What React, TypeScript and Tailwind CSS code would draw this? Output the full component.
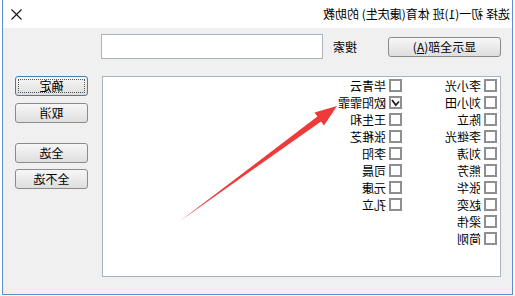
import React from 'react';

const col1 = ['李小光', '刘小田', '陈立', '李继光', '刘涛', '熊芳', '张华', '赵奕', '梁伟', '简刚'];
const col2 = ['毕青云', '欧阳霏霏', '王生和', '张稚芝', '李阳', '司晨', '元康', '孔立'];
const checked = ['欧阳霏霏'];

function Check({ label }: { label: string }) {
  const on = checked.includes(label);
  return (
    <div className="flex h-[17px] items-center gap-[3px]">
      <div className="flex h-[13px] w-[13px] items-center justify-center border-2 border-[#8f8f8f] bg-white">
        {on && (
          <svg width="9" height="9" viewBox="0 0 9 9">
            <path d="M1 3.5 L4.2 7 L8 2" fill="none" stroke="#222" strokeWidth="1.8" />
          </svg>
        )}
      </div>
      <span className="whitespace-nowrap text-[12px] leading-none text-black">{label}</span>
    </div>
  );
}

function Btn({ children, main }: { children: React.ReactNode; main?: boolean }) {
  return (
    <button
      className={
        'flex h-[20px] w-[73px] items-center justify-center rounded-[3px] border bg-gradient-to-b from-[#f7f7f7] to-[#dedede] text-[12px] text-black ' +
        (main ? 'border-[#3c7fb1]' : 'border-[#8a8a8a]')
      }
    >
      {main ? (
        <span className="flex h-[14px] w-[67px] items-center justify-center border border-dotted border-[#555]">
          {children}
        </span>
      ) : (
        children
      )}
    </button>
  );
}

export default function App() {
  return (
    <div
      className="relative h-[296px] w-[515px] overflow-hidden bg-white"
      style={{ fontFamily: '"Noto Sans CJK SC", "Liberation Sans", sans-serif' }}
    >
      <div className="h-full w-full -scale-x-100 px-[2px] pb-[1px]">
        <div className="flex h-full flex-col border-x border-b border-[#5b8fc7]">
          <div className="flex h-[28px] shrink-0 items-center justify-between bg-white pl-[2px] pr-[8px]">
            <span className="text-[12px] text-black">选择 初一(1)班 体育(康庆生) 的助教</span>
            <svg width="11" height="11" viewBox="0 0 11 11">
              <path d="M0.5 0.5 L10.5 10.5 M10.5 0.5 L0.5 10.5" stroke="#111" strokeWidth="1.1" />
            </svg>
          </div>
          <div className="flex-1 bg-[#f0f0f0] pl-[11px]">
            <div className="mt-[6px] flex h-[25px] items-center">
              <button className="flex h-[20px] w-[113px] items-center justify-center rounded-[3px] border border-[#8a8a8a] bg-gradient-to-b from-[#f7f7f7] to-[#dedede] text-[12px] text-black">
                显示全部(<span className="underline">A</span>)
              </button>
              <span className="ml-[31px] text-[12px] text-black">搜索</span>
              <div className="ml-[10px] h-[25px] w-[222px] border border-[#a9b3bd] bg-white" />
            </div>
            <div className="mt-[17px] flex">
              <div className="h-[201px] w-[399px] border border-[#a9b3bd] bg-white pl-[3px] pt-0">
                <div className="flex">
                  <div className="flex w-[95px] flex-col">
                    {col1.map((n) => (
                      <Check key={n} label={n} />
                    ))}
                  </div>
                  <div className="flex w-[95px] flex-col">
                    {col2.map((n) => (
                      <Check key={n} label={n} />
                    ))}
                  </div>
                </div>
              </div>
              <div className="ml-[14px] flex flex-col">
                <Btn main>确定</Btn>
                <div className="mt-[7px]">
                  <Btn>取消</Btn>
                </div>
                <div className="mt-[20px]">
                  <Btn>全选</Btn>
                </div>
                <div className="mt-[6px]">
                  <Btn>全不选</Btn>
                </div>
              </div>
            </div>
          </div>
        </div>
      </div>
      <svg className="pointer-events-none absolute inset-0" width="515" height="296" viewBox="0 0 515 296">
        <polygon
          points="180,221 317.4,116.6 314.5,112.5 337,106 324,125.5 321,121.4"
          fill="#ef3a3a"
        />
      </svg>
    </div>
  );
}
